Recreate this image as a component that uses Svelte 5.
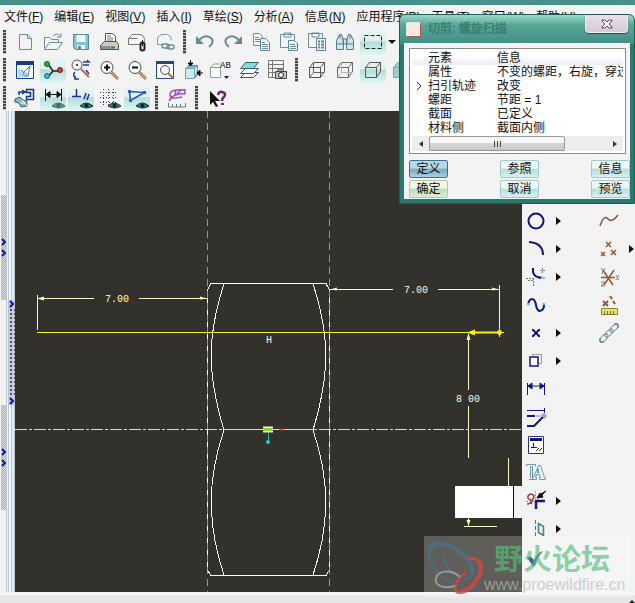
<script>
  const menus = [
    ['文件', 'F'], ['编辑', 'E'], ['视图', 'V'], ['插入', 'I'], ['草绘', 'S'], ['分析', 'A'],
    ['信息', 'N'], ['应用程序', 'P'], ['工具', 'T'], ['窗口', 'W'], ['帮助', 'H']
  ];

  const s = 'fill="none" stroke="#6b8f99"';
  const eye = '<path d="M7 19q6-6 13 0q-6 4-13 0z" fill="#3d7278" stroke="#17383d"/><circle cx="13.500" cy="18.500" r="2" fill="#062a30"/>';
  const lens = (mark) => `<path d="M14 14l7 7" stroke="#a9714b" stroke-width="3"/><path d="M14 14l7 7" stroke="#e7c2a0"/><circle cx="10" cy="9.500" r="6" fill="#f4f8f8" stroke="#4a4a55"/>${mark}`;
  const cube = `<path d="M4.500 9.500h11v10h-11zM4.500 9.500l4-5h11l-4 5M19.500 4.500v9l-4 6"`;

  const icons = {
    new: `<path d="M6.500 4.500h8l4 4v11h-12zM14.500 4.500v4h4" ${s}/>`,
    open: `<path d="M3.500 18.500v-11h5l2 2h7v3M3.500 19.500l5-7h13l-5 7zM12 6q4-4 7 0M20 3v4h-4" ${s}/>`,
    save: `<path d="M4.500 4.500h15v15h-13l-2-2z" fill="#7fc5c9" stroke="#4f8e98"/><path d="M7.500 5h9v7h-9z" fill="#eefafa"/><path d="M8 15h8v4h-8z" fill="#f6f6f6"/><path d="M9 16h3v3h-3z" fill="#5b9099"/>`,
    print: `<path d="M8.500 12v-8.500h7l3 3v6" fill="#fff" stroke="#555"/><path d="M10 6h4M10 8h6M10 10h6" stroke="#777"/><path d="M3.500 15.500l4-4h12l2 3v5h-18z" fill="#cfc9c0" stroke="#555"/><path d="M4 16h14v3h-14z" fill="#7b9b8b"/><path d="M15 17h3v1h-3z" fill="#d33"/>`,
    attach: `<path d="M3.500 14.500v-6l4-4h8q4 1 4 5v2M3.500 14.500h11M3.500 8.500h9" fill="none" stroke="#777"/><rect x="15.500" y="12.500" width="4" height="8" rx="2" fill="none" stroke="#222" stroke-width="2"/><path d="M17.500 10v6" stroke="#111"/>`,
    link: `<path d="M4.500 14.500v-7l4-3h6q4 1 4 6M4.500 14.500h7" fill="#f1f6f7" stroke="#7f9da6"/><rect x="9" y="14" width="7" height="4" rx="2" ${s} stroke-width="1.500"/><rect x="14" y="15" width="7" height="4" rx="2" ${s} stroke-width="1.500"/>`,
    undo: `<path d="M6 10q7-7 13-1q2 4-3 8" fill="none" stroke="#668b95" stroke-width="2"/><path d="M3 6v8h8z" fill="#668b95"/>`,
    redo: `<path d="M18 10q-7-7-13-1q-2 4 3 8" fill="none" stroke="#668b95" stroke-width="2"/><path d="M21 6v8h-8z" fill="#668b95"/>`,
    copy: `<path d="M4.500 3.500h6l3 3v9h-9zM6 7.500h4M6 9.500h6M6 11.500h6" ${s}/><path d="M11.500 8.500h5l4 4v8h-9z" fill="#eef4f6" stroke="#5f8591"/><path d="M13 12.500h3M13 14.500h6M13 16.500h6M13 18.500h6" ${s}/>`,
    paste: `<path d="M3.500 4.500h14v13h-14zM7 4v-1h7v4h-7z" ${s}/><path d="M11.500 10.500h6l3 3v7h-9z" fill="#eef4f6" stroke="#5f8591"/><path d="M13 14.500h5M13 16.500h6M13 18.500h6" ${s}/>`,
    special: `<path d="M3.500 3.500h14v14h-14zM7 4v-1h7v4h-7z" ${s}/><path d="M11.500 8.500h9v12h-9z" fill="#eef4f6" stroke="#5f8591"/><path d="M13 11.500h2M16 11.500h3M13 14.500h2M16 14.500h3M13 17.500h2M16 17.500h3" stroke="#5f8591" stroke-width="2"/>`,
    find: `<path d="M3.500 19.500v-9l3-6h2l2 6v9zM13.500 19.500v-9l2-6h2l3 6v9zM10 9h4v5h-4zM3 14h7M14 14h6M7 5v4M17 5v4" fill="#d3e4e8" stroke="#557d88"/>`,
    select: `<path d="M3.500 5.500h17v13h-17z" fill="none" stroke="#17272b" stroke-dasharray="4 2"/>`,
    repaint: `<path d="M3.500 3.500h17v17h-17z" fill="#f3fbff" stroke="#17407c"/><path d="M3 3h18v4h-18z" fill="#17407c"/><path d="M5 9l8 10h-8z" fill="#a7dff1"/><path d="M8 12l7 6M17 8l-7 7q0 4 5 3z" fill="#e4f6fb" stroke="#4d7fa5"/>`,
    spin: `<path d="M7 6l5 7h9M12 13l-5 6" fill="none" stroke="#222" stroke-width="1.500"/><circle cx="6" cy="6" r="2.500" fill="#24b32c" stroke="#126017"/><circle cx="19" cy="12" r="2.500" fill="#d43c36" stroke="#771411"/><circle cx="6" cy="18" r="2.500" fill="#37c4cf" stroke="#156a72"/>`,
    orient: `<path d="M12 11l8 8" stroke="#a9714b" stroke-width="2"/><circle cx="8" cy="7" r="5" fill="#f4f8f8" stroke="#555"/><circle cx="8" cy="7" r="1" fill="#111"/><path d="M14 4h6l-2-2M20 7h-6M6 14q-3 3 1 7M10 21h-4v-3M17 12l3 4" fill="none" stroke="#203d99" stroke-width="1.500"/>`,
    zoomin: lens('<path d="M7 9.500h6M10 6.500v6" stroke="#111" stroke-width="2"/>'),
    zoomout: lens('<path d="M7 9.500h6" stroke="#111" stroke-width="2"/>'),
    refit: `<path d="M3.500 3.500h17v17h-17z" fill="#fff" stroke="#24487c"/><path d="M3 3h18v3h-18z" fill="#24487c"/><path d="M15 15l5 5" stroke="#a9714b" stroke-width="2"/><circle cx="12" cy="12" r="4.500" fill="#eef5f6" stroke="#555"/>`,
    reorient: `<path d="M4.500 10.500h9v10h-9z" fill="#cfe9e9" stroke="#78a1a5"/><path d="M4.500 10.500l3-3h9l-3 3M16.500 8v9l-3 3" fill="#71bfc3" stroke="#5b9297"/><path d="M9.500 2v6M7 5l2.500 3 2.500-3zM22 15h-5M19 12l-3 3 3 3z" fill="#111" stroke="#111"/>`,
    views: `<path d="M1.500 9.500h10v10h-10zM2 9l3-3h6" fill="#f8fbfb" stroke="#83a1a6"/><path d="M15 18h5l-2.500 3z" fill="#222"/><text x="11" y="10" font-family="Liberation Mono" font-size="9" fill="#111">AB</text>`,
    layers: `<path d="M3.500 19.500l5-5h13l-5 5z" fill="#fff" stroke="#456"/><path d="M3.500 15.500l5-5h13l-5 5z" fill="#fff" stroke="#456"/><path d="M3.500 10.500l5-6h13l-5 6z" fill="#86d8df" stroke="#37656d"/>`,
    viewmgr: `<path d="M3.500 2.500h15v17h-15zM3.500 6.500h15M3.500 10.500h15M3.500 14.500h15M7.500 2.500v17" fill="none" stroke="#777"/><path d="M10.500 13.500h11v7h-11zM13 13v-2h4v2" fill="#c7c4bb" stroke="#444"/><circle cx="16" cy="17" r="2.500" fill="#fff" stroke="#222"/>`,
    wire: `${cube} fill="none" stroke="#555"/><path d="M8.500 4.500v10h11M8.500 14.500l-4 5" fill="none" stroke="#666"/>`,
    hidden: `${cube} fill="none" stroke="#666"/><path d="M8.500 4.500v10h11M8.500 14.500l-4 5" fill="none" stroke="#b5b5b5"/>`,
    nohidden: `${cube} fill="none" stroke="#555"/>`,
    shaded: `${cube} fill="#9fcccc" stroke="#7aa6a8"/>`,
    sketch: `<path d="M13.500 3.500h7v10h-7v-3h4v-4h-4zM6 9v-3h5M9 4l3 2-3 2" fill="none" stroke="#17328a" stroke-width="1.500"/><path d="M2 13l5-2 3 3 4 1v5l-6 1-2-4-4-1z" fill="#77bec1" stroke="#345f66"/><path d="M7 17h5M9 14l5 6" stroke="#fff"/>`,
    dims: `<path d="M4.500 3v12M20.500 3v12M5 8.500h15M9 5.500l-4 3 4 3zM16 5.500l4 3-4 3z" fill="#111" stroke="#111"/><g transform="translate(4 1)" opacity=".7">${eye}</g>`,
    constraints: `<path d="M7.500 3v8M3 10.500h9M15 13l2-6M18 14l2-6" stroke="#1f318c" stroke-width="1.500"/><g transform="translate(4 1)">${eye}</g>`,
    grid: `<path d="M6.500 3v16M11.500 3v16M16.500 3v16M3 6.500h18M3 11.500h18M3 16.500h18" stroke="#30396e" stroke-dasharray="1 2"/><g transform="translate(4 1)">${eye}</g>`,
    vertices: `<path d="M4.500 5.500l15 1-14 8z" fill="none" stroke="#2354a8" stroke-width="1.500"/><path d="M3 4h3v3h-3zM18 5h3v3h-3zM4 13h3v3h-3z" fill="#2c61bd"/><g transform="translate(4 1)">${eye}</g>`,
    curvature: `<path d="M20 4q-16-1-15 5q1 5 12 2M20 3v5M16 4l-4 4M11 4l-1 5M20 8q-7-1-15 4M7 11l-3 4" fill="none" stroke="#a44fb4" stroke-width="1.500"/><path d="M3.500 17v4h17v-4M7.500 18v3M11.500 18v3M15.500 18v3" fill="none" stroke="#667c83"/>`,
    help: `<path d="M5 5v14l3-3 3 5 2-1-3-5h5z" fill="#111"/><path d="M13 9q1-4 4-3q5 1 2 5q-2 1-2 4" fill="none" stroke="#69236c" stroke-width="2.500"/><path d="M16 17h3v2h-3z" fill="#69236c"/>`,
    circle: `<circle cx="12" cy="12" r="7.500" fill="none" stroke="#12177f" stroke-width="2"/>`,
    arc: `<path d="M5 5q14 1 14 13" fill="none" stroke="#12177f" stroke-width="2"/>`,
    fillet: `<path d="M9 3v4q1 6 11 6" fill="none" stroke="#12177f" stroke-width="2"/><path d="M17 13h4" stroke="#75cbe6" stroke-width="2"/><path d="M2 13.500h8M9.500 13v8M16 5.500h5M18.500 3v5M4 15.500h5" stroke="#777" stroke-dasharray="2 1"/>`,
    spline: `<path d="M4 12q1-6 4-6q3 0 4 6q1 6 4 6q4-1 4-6" fill="none" stroke="#12177f" stroke-width="2"/><path d="M3 11h3M18 11h3" stroke="#6acbe5" stroke-width="2"/>`,
    point: `<path d="M9 9l6 6M15 9l-6 6" stroke="#12177f" stroke-width="2"/><path d="M8 8h2v2h-2zM14 8h2v2h-2zM8 14h2v2h-2zM14 14h2v2h-2z" fill="#12177f"/>`,
    edge: `<path d="M8.500 8v-2.500h9v9h-3" fill="none" stroke="#999"/><path d="M6 8h8v9h-8z" fill="#fff" stroke="#12177f" stroke-width="1.500"/>`,
    dimension: `<path d="M3.500 6v12M20.500 6v12M5 9h14M8 6l-4 3 4 3zM16 6l4 3-4 3z" fill="#12177f" stroke="#12177f"/>`,
    modify: `<path d="M3 5.500h17M20.500 3v5" stroke="#12177f"/><path d="M3 11h8M3 21h7l9-9" fill="none" stroke="#12177f" stroke-width="2"/><path d="M12 11h5" stroke="#888"/><circle cx="20" cy="11" r="1.500" fill="#fff" stroke="#4552a0"/>`,
    constrain: `<path d="M4.500 3.500h15v17h-15z" fill="#fff" stroke="#2a3870"/><path d="M6 5h12v3h-12z" fill="#12177f"/><path d="M9.500 10v4M7 14.500h6M12 18l3-3M15 18l3-3" stroke="#222"/>`,
    text: `<path d="M2.500 5.500v-2h9v2M6.500 5v12M8.500 5v12M5 18.500h5M14.500 4.500h2l4 12h1v2h-6v-2h1l-1-3h-3l-1 3h1v2h-4v-2h1zM13 11.500h2l-1-4z" fill="none" stroke="#6b9aa5"/>`,
    trim: `<path d="M12 20v-8h9" fill="none" stroke="#12177f" stroke-width="2.500"/><path d="M3 15q5 0 4-4q-4-1-3-4q3-4 6 0l-3 8" fill="none" stroke="#a33c3c" stroke-width="1.500"/><path d="M11.500 2v9M2 12.500h8" stroke="#999" stroke-dasharray="2 1"/><path d="M22 2l-4 4 1 2-6 1 3-5 1 1z" fill="#111" stroke="#111"/>`,
    mirror: `<path d="M11.500 3v18" stroke="#4c7e8a" stroke-dasharray="4 2"/><path d="M14.500 6.500l5 3v9l-5-3z" fill="#e7f1f2" stroke="#4c7e8a" stroke-width="1.500"/>`,
    done: `<path d="M3 13l3-2 4 4q3-7 9-9q-6 6-8 15h-2z" fill="#182f86"/>`,
    curve: `<path d="M3 17q4-12 8-7q4 4 10-4" fill="none" stroke="#8c5332" stroke-width="1.500"/>`,
    points: `<path d="M9 5l5 5M14 5l-5 5M4 15l4 4M8 15l-4 4M14 13l5 5M19 13l-5 5" stroke="#95562f" stroke-width="1.500"/>`,
    csys: `<path d="M4 12.500h14M6 5l10 15M17 5l-10 15" stroke="#95562f" stroke-width="1.500"/><path d="M4 3l2 3 2-3M6 6l-1 3M19 10l3 5M22 10l-3 5M4 17h4l-4 4h4" fill="none" stroke="#77838b"/>`,
    measure: `<path d="M6 8l5 5M11 8l-5 5M13 3l2 3M16 8l2 3" stroke="#95562f" stroke-width="2"/><path d="M4.500 15.500h16v6h-16z" fill="#eae36d" stroke="#8b8738"/><path d="M7.500 18v4M10.500 18v4M13.500 18v4M16.500 18v4" stroke="#77752f"/>`,
    chain: `<g ${s}><ellipse cx="7" cy="17" rx="5" ry="2.500" transform="rotate(-45 7 17)"/><ellipse cx="12" cy="12" rx="5" ry="2.500" transform="rotate(-45 12 12)"/><ellipse cx="17" cy="7" rx="5" ry="2.500" transform="rotate(-45 17 7)"/></g><path d="M3 17v4h4M17 3h4v4" fill="none" stroke="#477986"/>`
  };

  const rows = [
    ['new', 'open', 'save', 'print', 'attach', 'link', '|', 'undo', 'redo', 'copy', 'paste', 'special', 'find', 'select', '>'],
    ['repaint', 'spin', 'orient', 'zoomin', 'zoomout', 'refit', 'reorient', 'views', 'layers', 'viewmgr', '|', 'wire', 'hidden', 'nohidden', 'shaded'],
    ['sketch', 'dims', 'constraints', 'grid', 'vertices', '|', 'curvature', '|', 'help']
  ];
  const active = new Set(['select', 'spin', 'nohidden', 'dims', 'constraints', 'vertices']);

  const sketchTools = [
    ['circle', true], ['arc', true], ['fillet', true], ['spline', false], ['point', true], ['edge', true],
    ['dimension', false], ['modify', false], ['constrain', false], ['text', false], ['trim', true],
    ['mirror', true], ['done', false]
  ];
  const datumTools = [['curve', false], ['points', true], ['csys', false], ['measure', false], ['chain', false]];

  const elements = [
    ['', '属性', '不变的螺距，右旋，穿过'],
    ['>', '扫引轨迹', '改变'],
    ['', '螺距', '节距 = 1'],
    ['', '截面', '已定义'],
    ['', '材料侧', '截面内侧']
  ];
</script>

{#snippet icon(name)}
  <svg class="icon" viewBox="0 0 24 24" aria-hidden="true">{@html icons[name]}</svg>
{/snippet}

{#snippet chevron()}
  <svg class="chevron" viewBox="0 0 6 8" aria-hidden="true"><path d="M1 1l3 3-3 3" /></svg>
{/snippet}

{#snippet palette(tools)}
  <div class="palette">
    {#each tools as [name, more]}
      <div class="tool-row">
        <button class="tool" aria-label={name}>{@render icon(name)}</button>
        {#if more}<button class="flyout" aria-label="{name} options"></button>{/if}
      </div>
    {/each}
  </div>
{/snippet}

<div class="app">
  <div class="frame-top"></div>
  <nav class="menubar">
    {#each menus as [label, key]}
      <button>{label}(<u>{key}</u>)</button>
    {/each}
  </nav>
  <div class="toolbars">
    {#each rows as row}
      <div class="toolbar" role="toolbar">
        <span class="grip"></span>
        {#each row as name}
          {#if name === '|'}
            <span class="grip"></span>
          {:else if name === '>'}
            <button class="more" aria-label="select options"></button>
          {:else}
            <button class="tool" class:active={active.has(name)} aria-label={name}>{@render icon(name)}</button>
          {/if}
        {/each}
      </div>
    {/each}
  </div>

  <main>
    <aside class="rail">
      <div class="rail-outer">
        <div class="strip">{@render chevron()}{@render chevron()}</div>
        <div class="strip">{@render chevron()}{@render chevron()}</div>
      </div>
      <div class="rail-inner">
        <div class="sash">{@render chevron()}{@render chevron()}</div>
      </div>
    </aside>

    <section class="stage">
      <svg class="drawing" viewBox="15 111 507 481" preserveAspectRatio="xMinYMin meet">
        <g class="thin">
          <path class="outline" d="M207.500 290V570M329.500 290V570" />
          <path class="axis" d="M207.500 111V592M329.500 111V592" />
          <path class="outline" d="M207.500 290L211 283.500H326L329.500 290M207.500 570L211 575.500H326L329.500 570" />
          <path class="outline" d="M224 284C207 336 207 374 224 430C207 480 207 524 224 575M313 284C330 336 330 374 313 430C330 480 330 524 313 575" />
          <path class="yellow" d="M37 332.500H499" />
          <path class="yellow" d="M15 429.500H522" stroke-dasharray="12 2 3 2" />
          <path class="yellow" d="M224 429.500H313" />
          <path class="dim" d="M37.500 295V330M38 298.500H94M139 298.500H207M330 289.500H393M438 289.500H499M499.500 285V332M468.500 334V390M468.500 406V458M508.500 458V486M468.500 518V526M464 526.500H497" />
        </g>
        <path class="head" d="M37 298.500l7-2v4zM207 298.500l-7-2v3zM330 289.500l7-2v3zM499 289.500l-7-2v3zM468.500 333l-2 7h4zM468.500 526l-2-6h4z" />
        <path class="trail" d="M499 332.500H474" />
        <path class="trail-head" d="M467 332.500l8-3v6zM499.500 329l3 3.500-3 3.500-3-3.500z" />
        <path class="trail-cross" d="M495 332.500h9M499.500 328v9" />
        <path d="M263 427.500h10M263 431.500h10" stroke="#f4f8b0" stroke-width="2" />
        <path d="M264 429.500h8" stroke="#83d143" stroke-width="3" />
        <path d="M279 429.500h5" stroke="#e03c20" stroke-width="2" />
        <path d="M268.500 433v7" stroke="#2aaea7" />
        <circle cx="268" cy="442" r="2" fill="#21d5d0" />
        <text x="117" y="302">7.00</text>
        <text x="416" y="293">7.00</text>
        <text x="468" y="402">8 00</text>
        <text x="269" y="343">H</text>
        <rect x="513" y="486" width="9" height="32" fill="#f3f3f3" />
        <rect x="513" y="486" width="1" height="32" fill="#111" />
        <foreignObject x="455" y="486" width="58" height="32">
          <input class="value" type="text" aria-label="尺寸值" />
        </foreignObject>
      </svg>
    </section>

    <aside class="palettes">
      {@render palette(sketchTools)}
      {@render palette(datumTools)}
    </aside>
  </main>

  <footer><span class="corner"></span></footer>

  <section class="dialog" role="dialog" aria-labelledby="dialog-title">
    <header>
      <span class="app-mark"></span>
      <h1 id="dialog-title">切剪: 螺旋扫描</h1>
      <button class="close" aria-label="关闭">
        <svg viewBox="0 0 12 10" aria-hidden="true"><path d="M1 1h3l2 2 2-2h3v1L8 5l3 3v1H8L6 7 4 9H1V8l3-3-3-3z" /></svg>
      </button>
    </header>
    <div class="dialog-body">
      <div class="list">
        <div class="list-view">
          <table>
            <thead><tr><th class="mark"></th><th class="name">元素</th><th>信息</th></tr></thead>
            <tbody>
              {#each elements as [mark, name, info]}
                <tr>
                  <td class="mark">{#if mark}<svg viewBox="0 0 6 10" aria-hidden="true"><path d="M1 1l4 4-4 4" /></svg>{/if}</td>
                  <td>{name}</td>
                  <td>{info}</td>
                </tr>
              {/each}
            </tbody>
          </table>
        </div>
        <div class="scroll">
          <button class="step left" aria-label="向左"></button>
          <div class="track"><div class="thumb"><i></i><i></i><i></i></div></div>
          <button class="step right" aria-label="向右"></button>
        </div>
      </div>
      <div class="actions">
        <button class="define">定义</button><button>参照</button><button>信息</button>
        <button class="ok">确定</button><button>取消</button><button>预览</button>
      </div>
    </div>
  </section>

  <div class="watermark">
    <svg class="logo" viewBox="0 0 58 56" aria-hidden="true">
      <path d="M27 44C12 38 2 21 4 10C6 0 24 3 36 14C47 25 52 36 44 39C34 43 20 30 18 16" fill="none" stroke="#4a7186" stroke-width="2" />
      <path d="M5 14C3 1 22 2 36 14C45 23 50 31 47 36" fill="none" stroke="#4a7186" stroke-width="4" />
      <path d="M42 20C51 18 58 23 56 33C53 45 41 56 32 53C27 49 33 38 41 34" fill="none" stroke="#d24848" stroke-width="3" />
      <path d="M54 22C60 33 48 50 35 53" fill="none" stroke="#d24848" stroke-width="4" />
      <path d="M30 47C19 50 9 47 11 39C14 30 28 31 35 38" fill="none" stroke="#a8aaaa" stroke-width="2" />
    </svg>
    <div class="brand">
      <strong>野火论坛</strong>
      <span>www.proewildfire.cn</span>
    </div>
  </div>
</div>

<style>
  :global(body) { margin: 0; }
  .app {
    position: relative;
    display: flex;
    flex-direction: column;
    height: 100vh;
    overflow: hidden;
    background: #f3f3f3;
    color: #111;
    font: 12px/14px "Liberation Sans", "Noto Sans CJK SC", sans-serif;
  }
  button { padding: 0; border: 0; background: none; color: inherit; font: inherit; }
  .frame-top { flex: none; height: 5px; background: #45918a; }

  .menubar { display: flex; flex: none; gap: 11px; height: 23px; padding-left: 4px; white-space: nowrap; }
  .menubar button { flex: none; }
  .toolbars { flex: none; }
  .toolbar { display: flex; align-items: center; gap: 2px; height: 28px; }
  .toolbar:last-child { height: 27px; }
  .tool { display: grid; flex: none; place-items: center; width: 26px; height: 26px; }
  .active { background: linear-gradient(#e9f6f5, #dfefee 45%, #b5dcda 50%, #dff8f4); }
  .icon { display: block; width: 24px; height: 24px; }
  .grip { flex: none; box-sizing: border-box; width: 10px; height: 24px; padding: 0 4px 0 3px; background: repeating-linear-gradient(#444 0 2px, #bbb 2px 3px) content-box; }
  .more { width: 0; height: 0; border: solid transparent; border-width: 4px 4px 0; border-top-color: #111; }

  main { display: flex; flex: 1; min-height: 0; }
  .rail { display: flex; flex: none; width: 15px; }
  .rail-outer { display: flex; flex-direction: column; justify-content: space-between; width: 6px; padding: 84px 0 82px 1px; box-sizing: border-box; }
  .strip, .sash { display: flex; flex-direction: column; height: 105px; }
  .strip { align-items: center; justify-content: center; gap: 3px; background: repeating-conic-gradient(#aaa 0 25%, #dedede 0 50%) 0 0 / 2px 2px; }
  .rail-inner { flex: 1; padding-top: 189px; background: linear-gradient(90deg, #b8c8d5 0 1px, #eef2f7 1px 2px, #b8c8d5 2px 3px, #f2f6fa 3px 5px, #b8c8d5 5px 6px, #e1ebf3 6px 8px, #b8c8d5 8px); }
  .sash { justify-content: space-between; align-items: center; margin-left: 3px; background: radial-gradient(#555 0 1px, transparent 1px) 0 0 / 4px 4px, #c8cbe0; }
  .chevron { display: block; width: 6px; height: 8px; background: #c4c6de; fill: none; stroke: #15158f; stroke-width: 2; }

  .stage { flex: 1; min-width: 0; background: #32312c; }
  .drawing { display: block; width: 100%; height: 100%; }
  .drawing text { fill: #fffed0; font: 10px "Liberation Mono", monospace; text-anchor: middle; }
  .thin path { fill: none; shape-rendering: crispEdges; }
  .thin .axis { stroke: #e0862a; stroke-dasharray: 7 5; }
  .thin .outline { stroke: #fff; }
  .thin .yellow { stroke: #f0ee3a; }
  .thin .dim { stroke: #fbfac0; }
  .head { fill: #fdfcc8; }
  .trail { stroke: #f8f321; stroke-width: 2; }
  .trail-head { fill: #f8f321; }
  .trail-cross { stroke: #f8f321; }
  .value { display: block; box-sizing: border-box; width: 100%; height: 100%; padding: 0 4px; border: 0; background: #fff; }

  .palettes { display: flex; flex: none; gap: 33px; width: 113px; padding: 96px 0 0 1px; box-sizing: border-box; }
  .palette { width: 40px; }
  .tool-row { display: flex; align-items: center; gap: 7px; height: 28px; }
  .flyout { width: 0; height: 0; border: solid transparent; border-width: 4px 0 4px 5px; border-left-color: #111; }

  footer { display: flex; flex: none; align-items: end; justify-content: end; box-sizing: border-box; height: 11px; border-top: 3px solid #f5f5f5; background: #e6e6e6; }
  .corner { width: 0; height: 0; border: solid transparent; border-width: 0 3px 3px; border-bottom-color: #222; }

  .dialog {
    position: absolute;
    top: 14px;
    right: 0;
    width: 236px;
    box-sizing: border-box;
    padding: 0 4px 4px;
    border: 1px solid #1f5c54;
    border-radius: 6px 6px 0 0;
    background: linear-gradient(#9ad8ca, #59a699 10px, #438f84 28px, #287a6f 30px);
  }
  header { display: flex; align-items: center; height: 28px; }
  .app-mark { width: 15px; height: 15px; margin: 0 7px 0 2px; border: 1px solid #d4ece6; border-right-color: #b55; border-bottom-color: #b55; box-sizing: border-box; background: #f5ebe0; }
  h1 { flex: 1; margin: 0; color: #387b71; font-size: 12px; font-weight: normal; line-height: 16px; text-shadow: 0 0 1px #387b71; }
  .close { display: grid; align-self: flex-start; place-items: center; width: 43px; height: 18px; margin-right: 2px; border: 1px solid #efe8f0; border-top: 0; border-radius: 0 0 4px 4px; background: linear-gradient(#eadfea, #d8c8dc); box-shadow: 0 1px 1px #24504b; }
  .close svg { width: 12px; height: 10px; fill: #fff; stroke: #5a4760; }
  .dialog-body { padding: 5px 0 1px 5px; background: #f3f3f3; }
  .list { margin-right: 4px; padding: 2px; border: 1px solid #8b8b8b; background: #fff; }
  .list-view { height: 84px; padding-bottom: 1px; overflow: hidden; }
  table { width: 100%; border-collapse: collapse; table-layout: fixed; line-height: 14px; }
  th, td { height: 14px; padding: 0; font-weight: normal; text-align: left; white-space: nowrap; }
  thead tr { background: linear-gradient(#fff 40%, #ececf2); }
  .mark { width: 16px; }
  td.mark { padding-left: 4px; box-sizing: border-box; }
  .mark svg { display: block; width: 6px; height: 10px; fill: none; stroke: #222; }
  .name { width: 69px; }
  .scroll { display: flex; height: 15px; background: #ededed; }
  .step { display: grid; place-items: center; width: 17px; }
  .step::before { content: ""; border: solid transparent; border-width: 3px 4px; }
  .left::before { border-left-width: 0; border-right-color: #333; }
  .right::before { border-right-width: 0; border-left-color: #333; }
  .track { flex: 1; }
  .thumb { display: flex; align-items: center; justify-content: center; gap: 2px; width: 77%; height: 15px; box-sizing: border-box; border: 1px solid #999; border-radius: 2px; background: linear-gradient(#f6f6f6 45%, #d7d7d9 50%, #c8c8cb); }
  .thumb i { width: 1px; height: 6px; background: #444; }
  .actions { display: grid; grid-template-columns: repeat(3, 39px); justify-content: space-between; gap: 2px 0; margin-top: 6px; }
  .actions button { box-sizing: border-box; height: 18px; border: 1px solid #a5c8cc; border-radius: 2px; background: linear-gradient(#edf8f8 45%, #b9dcde 50%, #d8f1f1); line-height: 16px; }
  .actions .define { border-color: #3f718b; background: linear-gradient(#b9d8e5 45%, #75a9c2 50%, #a8d0df); }
  .actions .ok { border-color: #b0c9a9; background: linear-gradient(#eff7eb 45%, #c1dbb7 50%, #dcefd6); }

  .watermark { position: absolute; right: 5px; bottom: 5px; display: flex; align-items: flex-start; gap: 1px; width: 206px; height: 62px; box-sizing: border-box; padding: 3px 0 0 1px; background: rgb(255 255 255 / 22%); pointer-events: none; }
  .logo { flex: none; width: 58px; height: 56px; opacity: .8; }
  .brand { display: flex; flex-direction: column; opacity: .65; white-space: nowrap; }
  strong { padding-left: 10px; color: #58bd7c; font: bold 29px/36px "Noto Sans CJK SC", sans-serif; }
  .brand span { color: #b5bcbc; font-size: 16px; line-height: 20px; }
</style>
